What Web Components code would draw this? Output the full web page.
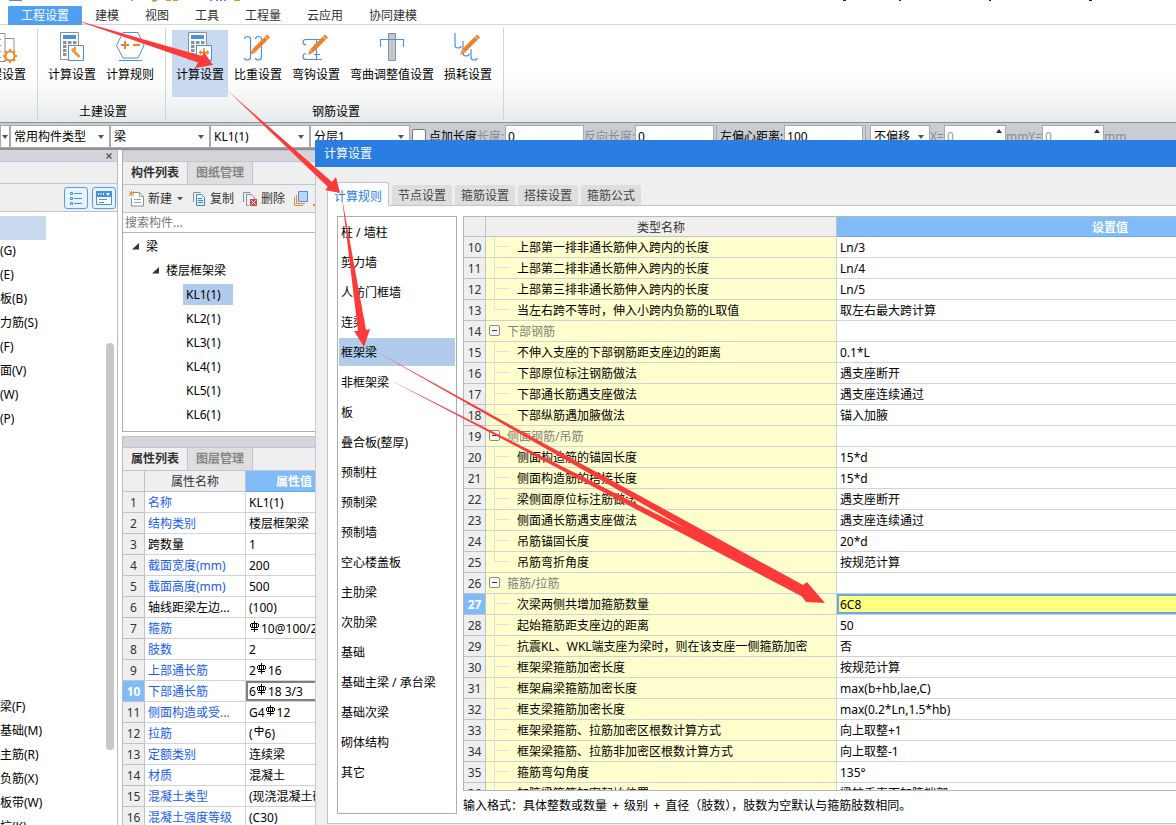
<!DOCTYPE html>
<html lang="zh-CN">
<head>
<meta charset="utf-8">
<title>计算设置</title>
<style>
html,body{height:100%}
body{margin:0;overflow:hidden;background:#fff;color:#000;font:12px/16px "Noto Sans","Noto Sans CJK SC",sans-serif}
</style>
</head>
<body>
<cost-app></cost-app>
<script>
const BASE = `*{box-sizing:border-box}button,input,select{font:inherit;color:inherit;margin:0;padding:0;border:0;background:none;border-radius:0;outline:0;appearance:none}
button{white-space:nowrap}a{color:inherit;text-decoration:none}svg{display:block;flex:none}ul{list-style:none;margin:0;padding:0}table{border-collapse:separate;border-spacing:0;table-layout:fixed}`;
function define(name, css, html) {
  customElements.define(name, class extends HTMLElement {
    constructor() {
      super();
      const t = document.createElement('template');
      t.innerHTML = `<style>${BASE}${css}</style>` + (typeof html === 'function' ? html(this) : html);
      this.attachShadow({ mode: 'open' }).appendChild(t.content.cloneNode(true));
    }
  });
}

const PENCIL = `<path d="M24 2.500l3 3-15 15-5 2.500 2-5.500z" fill="#f08028"/><path d="M22 4.500l3 3" stroke="#fff"/><path d="M9 17.500l3 3" stroke="#fff" stroke-width=".6"/>`;
const CALC = `<path d="M3.500 .5h18v27h-18z" fill="#fff" stroke="#84939e"/><path d="M6 3h13v4H6z" fill="#4c90dc"/><g fill="#84939e"><path d="M6 9h3.500v3H6zM11 9h3.500v3H11zM16 9h3.500v3H16zM6 13h3.500v3H6zM11 13h3.500v3H11zM6 17h3.500v3H6zM6 21h3.500v3H6z"/></g><path d="M11.500 13.500h15v15h-15z" fill="#fff" stroke="#4c90dc"/>`;
const ICONS = {
  project: `<path d="M2 1.500h16v28H2M18 6.500h9v22h-5" fill="none" stroke="#84939e"/><path d="M2 7.500h12M2 13.500h12M2 19.500h12M2 25.500h12" stroke="#84939e"/><circle cx="23" cy="24" r="4.500" fill="#fff" stroke="#f08a30" stroke-width="2"/><path d="M23 17v3M23 28v3M16 24h3M27 24h3M18 19l2 2M26 27l2 2M28 19l-2 2M20 27l-2 2" stroke="#f08a30" stroke-width="2"/>`,
  calc: CALC + `<path d="M16 18.500l6.500 6.500" stroke="#f0943c" stroke-width="2.500"/><path d="M14.500 16v3.500h3l1.500-1.500v-3l-2-.5v2z" fill="#f0943c"/>`,
  rule: `<path d="M8 .5h15l6 13-6 12.500H8L1.500 13.500z" fill="none" stroke="#4c90dc"/><path d="M4 28.500h23" stroke="#4c90dc"/><path d="M6 13h8M10 9v8M18 13h7" stroke="#f08028" stroke-width="2"/>`,
  rebar: CALC + `<path d="M14 20.500h10M19 16v9q-3 1-3-2M15.500 18.500v4M22.500 18.500v4" stroke="#f08028" fill="none" stroke-width="1.500"/>`,
  weight: `<path d="M1.500 7q0-2.500 3-2.500t3 2.500v18q0 3-3 3t-3-2M12.500 7q0-2.500 3-2.500t3 2.500v18q0 3-3 3t-3-2" stroke="#4c90dc" stroke-width="1.200" fill="none"/>` + PENCIL,
  hook: `<path d="M21 7.500H5q-3 0-3 2.500t3 3M21 27.500H5q-3 0-3-3t3-3M15.500 7.500v20M13 12.500h6M13 22.500h6" stroke="#4c90dc" stroke-width="1.200" fill="none"/>` + PENCIL,
  bend: `<path d="M11.500 1.500h7v27h-7z" fill="#c3c8cc" stroke="#84939e"/><path d="M3.500 15V7.500h23V15" stroke="#4c90dc" stroke-width="1.200" fill="none"/>`,
  loss: `<path d="M2 1v12q0 3 3 3t3-2M10 9v12q0 3 3 3t3-2M18 17v8q0 3 3 3t3-2" stroke="#4c90dc" stroke-width="1.200" fill="none"/>` + PENCIL
};

define('ribbon-tab', `:host{display:block}a{display:block;height:19px;line-height:20px;padding:0 13px;color:#333}
:host([active]) a{background:#4fa0f5;color:#fff;border-radius:1px 1px 0 0}`, '<a href="#"><slot></slot></a>');

define('ribbon-button', `:host{display:block}button{display:flex;flex-direction:column;align-items:center;padding:2px 4px 0;height:67px}
:host([active]) button{background:#c9d9f0}span{margin-top:4px;line-height:16px}`,
  el => `<button type="button"><svg width="30" height="31" viewBox="0 0 30 31">${ICONS[el.getAttribute('icon')]}</svg><span><slot></slot></span></button>`);

define('ribbon-group', `:host{display:flex;flex-direction:column;align-items:center;height:92px;padding:2px 7px 0 6px;border-right:1px solid #d0d4d6;margin-top:3px}
div{display:flex;gap:2px}p{margin:8px 0 0;line-height:14px;padding-left:4px}`,
  el => `<div><slot></slot></div><p>${el.getAttribute('label') || ''}</p>`);

define('app-ribbon', `:host{display:block}
.top{height:5px;overflow:hidden}nav{display:flex;height:20px;padding:0 8px;border-bottom:1px solid #d4d6d8;padding-top:1px}
.groups{display:flex;height:98px;background:linear-gradient(#fff 50%,#f2f4f4 80%,#e6eaea);border-bottom:1px solid #8c9094}
.cut{width:38px;overflow:hidden;align-items:flex-end}`,
`<div class="top"><svg width="1176" height="3"><path d="M9 0h13v1H9z" fill="#4c90dc"/><path d="M131 0h2v1h-2zM152 0h5v1h-2v1h-2v-1h-1zM166 0h5v1h-5zM173 0h5v1h-5zM234 0h6v1h-6z" fill="#f08a30"/><path d="M210 0h2v1h-2zM216 0h2v1h-2zM220 0h2v1h-2zM224 0h2v1h-2z" fill="#4c90dc"/><path d="M843 0h3v1h-3zM899 0h2v1h-2zM989 0h2v1h-2zM1089 0h3v1h-3z" fill="#222"/></svg></div>
<nav><ribbon-tab active>工程设置</ribbon-tab><ribbon-tab>建模</ribbon-tab><ribbon-tab>视图</ribbon-tab><ribbon-tab>工具</ribbon-tab><ribbon-tab>工程量</ribbon-tab><ribbon-tab>云应用</ribbon-tab><ribbon-tab>协同建模</ribbon-tab></nav>
<div class="groups">
<ribbon-group class="cut"><ribbon-button icon="project">工程设置</ribbon-button></ribbon-group>
<ribbon-group label="土建设置"><ribbon-button icon="calc">计算设置</ribbon-button><ribbon-button icon="rule">计算规则</ribbon-button></ribbon-group>
<ribbon-group label="钢筋设置"><ribbon-button icon="rebar" active>计算设置</ribbon-button><ribbon-button icon="weight">比重设置</ribbon-button><ribbon-button icon="hook">弯钩设置</ribbon-button><ribbon-button icon="bend">弯曲调整值设置</ribbon-button><ribbon-button icon="loss">损耗设置</ribbon-button></ribbon-group>
</div>`);

define('option-bar', `:host{display:flex;height:27px;padding-top:2px;background:#c9ccd2;border-bottom:2px solid #8e9196;white-space:nowrap;overflow:hidden}
.sel{position:relative;flex:none;width:100px;height:23px}
.sel::after{content:"";position:absolute;right:6px;top:10px;border:3px solid transparent;border-top:4px solid #555;border-bottom:0}
select,input{background:#fff;border:1px solid #a6aaae;height:23px;padding:0 3px;width:100%}
.first{width:10px}.first::after{right:2px}.off{width:60px;margin-left:1px}
input[type=text]{flex:none;width:79px;padding:0 2px}
.num{position:relative;flex:none;width:62px;color:#999}.num input[type=text]{width:62px}
.num::after{content:"";position:absolute;right:4px;top:4px;border:3px solid transparent;border-bottom:4px solid #333;border-top:0}
label{display:flex;line-height:23px;flex:none}
input[type=checkbox]{width:14px;height:14px;border:1px solid #777;border-radius:2px;margin:4px 3px 0 2px}
.g{color:#8a8d90}.len{width:28px}.rev{width:51px}.left{width:64px}
i{width:1px;height:23px;background:#a6aaae;margin:0 3px 0 2px}`,
`<div class="sel first"><select aria-label="楼层"><option></option></select></div>
<div class="sel"><select aria-label="构件分类"><option>常用构件类型</option></select></div>
<div class="sel"><select aria-label="构件类型"><option>梁</option></select></div>
<div class="sel"><select aria-label="构件"><option>KL1(1)</option></select></div>
<div class="sel"><select aria-label="分层"><option>分层1</option></select></div>
<label><input type="checkbox"><span>点加长度</span></label>
<label class="g len" for="len">长度:</label><input type="text" value="0" id="len">
<label class="g rev" for="rev">反向长度:</label><input type="text" value="0" id="rev">
<i></i><label class="left" for="left">左偏心距离:</label><input type="text" value="100" id="left">
<i></i><div class="sel off"><select aria-label="偏移"><option>不偏移</option></select></div>
<label class="g" for="x">X=</label><div class="num"><input type="text" value="0" id="x"></div>
<label class="g" for="y">mmY=</label><div class="num"><input type="text" value="0" id="y"></div>
<label class="g" for="y">mm</label>`);

const NAV = ['', '(G)', '(E)', '板(B)', '力筋(S)', '(F)', '面(V)', '(W)', '(P)', ...Array(11).fill(''), '梁(F)', '基础(M)', '主筋(R)', '负筋(X)', '板带(W)', '坑(K)'];
define('nav-panel', `:host{display:flex;flex-direction:column;width:118px;flex:none;border-right:1px solid #b9bdc3;overflow:hidden}
header{flex:none;height:12px;background:#d4d5da;border-bottom:1px solid #c0c4cc;display:flex;justify-content:flex-end;padding-right:3px}
header button{width:10px;height:11px;display:flex;align-items:center;justify-content:center}
.bar{flex:none;height:22px;background:#efefef;border-bottom:1px solid #c0c4cc}
.tools{flex:none;height:28px;background:#efefef;border-bottom:1px solid #c0c4cc;display:flex;justify-content:flex-end;gap:4px;padding:3px 1px 0}
.tools button{width:24px;height:22px;border:1px solid #4fa0f5;border-radius:3px;background:#e9f3fe;display:flex;align-items:center;justify-content:center}
.body{position:relative;flex:1;min-height:0;overflow:hidden;padding-top:3px}
li{height:24px;line-height:24px}li:first-child::before{content:"";display:block;width:46px;height:24px;background:#c9d9f0;border:solid #fff;border-width:1px 0 2px}
.thumb{position:absolute;left:106px;top:131px;width:8px;height:407px;border-radius:4px;background:#c8c8c8}`,
`<header><button type="button" aria-label="关闭"><svg width="6" height="6"><path d="M.5.5l5 5M5.500.5l-5 5" stroke="#555" stroke-width="1.200"/></svg></button></header>
<div class="bar"></div>
<div class="tools"><button type="button" aria-label="列表"><svg width="14" height="14" fill="none" stroke="#4590e0"><path d="M1.500 1.500h2v2h-2zM1.500 6.500h2v2h-2zM1.500 11.500h2v2h-2zM5 2.500h8M5 7.500h8M5 12.500h8"/></svg></button>
<button type="button" aria-label="窗格"><svg width="16" height="14"><path d="M.5.5h15v13H.5z" fill="#fff" stroke="#4590e0"/><path d="M1 1h14v5H1z" fill="#4590e0"/><path d="M2.500 2v2M5 2v2M7.500 2v2" stroke="#fff"/><path d="M10 2h4l-2 3z" fill="#fff"/><path d="M3 8.500h8M3 11.500h5" stroke="#4590e0"/></svg></button></div>
<div class="body"><ul>${NAV.map(t => `<li>${t}</li>`).join('')}</ul><div class="thumb"></div></div>`);

define('dock-tabs', `:host{display:block;flex:none}.strip{height:12px;background:#d4d5da;border:1px solid #c0c4cc;border-width:1px 0}
nav{display:flex;height:23px;background:#efefef;border-bottom:1px solid #c0c4cc}
button{width:65px;height:22px;line-height:22px;font-weight:bold;color:#333;border-right:1px solid #c0c4cc}
button+button{background:#dedede;color:#858585}`,
  el => `<div class="strip"></div><nav>${el.getAttribute('tabs').split(',').map(t => `<button type="button">${t}</button>`).join('')}</nav>`);

define('component-list', `:host{display:flex;flex-direction:column;flex:none;height:282px;border:1px solid #a9adb3;border-top:0}
.tools{display:flex;align-items:center;height:28px;background:#efefef;border-bottom:1px solid #c0c4cc;padding:1px 0 0 6px;flex:none;overflow:hidden}
.tools button{display:flex;align-items:center;gap:4px;height:20px;color:#333;margin-right:8px}.tools button.w{margin-right:9px}.tools span{line-height:18px}
.caret{margin-left:1px}
input{height:20px;width:100%;padding:0 2px;background:#fff;border-bottom:1px solid #b4b8be;flex:none}input::placeholder{color:#777;opacity:1}
ul{padding-top:1px}li{height:24px;line-height:24px;display:flex;align-items:center;padding-left:60px}
li span{line-height:21px;padding:0 12px 0 3px}li.on span{background:#b1cbec}
.a{padding-left:9px;gap:4px}.b{padding-left:29px;gap:4px}`,
`<dock-tabs tabs="构件列表,图纸管理"></dock-tabs>
<div class="tools">
<button type="button" class="w"><svg width="15" height="16" fill="none"><path d="M4 1.500h6.500l4 4v9.500h-12V7" fill="#fff" stroke="#84939e"/><path d="M10.500 1.500v4h4M5 8.500h7M5 11.500h7" stroke="#9aa6ae"/><path d="M0 0l5 5M5 0L0 5M2.500 0v5M0 2.500h5" stroke="#f0a040"/></svg><span>新建</span><svg class="caret" width="6" height="4"><path d="M0 0h6L3 3.500z" fill="#555"/></svg></button>
<button type="button"><svg width="14" height="16" fill="none"><path d="M1.500 11V1.500h7" stroke="#84939e"/><path d="M4.500 3.500h5l3 3v8h-8z" fill="#e9f3fe" stroke="#3d85d4"/><path d="M6 7.500h4M6 9.500h5M6 11.500h5" stroke="#3d85d4"/></svg><span>复制</span></button>
<button type="button"><svg width="15" height="16" fill="none"><path d="M1.500 11V1.500h7" stroke="#84939e"/><path d="M7 14.500H4.500v-11h5l3 3V8" stroke="#84939e"/><path d="M8 8h7v7H8z" fill="#d04848"/><path d="M9.500 9.500l4 4M13.500 9.500l-4 4" stroke="#fff"/></svg><span>删除</span></button>
<button type="button" aria-label="层间复制"><svg width="22" height="16" fill="none"><path d="M1.500 6v8.500H10M3.500 4v8.500H12" stroke="#f08a30"/><path d="M5.500.5h9v10h-9z" fill="#b9d7fb" stroke="#4590e0"/><path d="M20 13h2v2h-2z" fill="#f08a30"/></svg></button>
</div>
<input type="search" placeholder="搜索构件..." aria-label="搜索构件">
<ul><li class="a"><svg width="7" height="7"><path d="M7 0v6.500H0z" fill="#333"/></svg><span>梁</span></li>
<li class="b"><svg width="7" height="7"><path d="M7 0v6.500H0z" fill="#333"/></svg><span>楼层框架梁</span></li>
<li class="on"><span>KL1(1)</span></li><li><span>KL2(1)</span></li><li><span>KL3(1)</span></li><li><span>KL4(1)</span></li><li><span>KL5(1)</span></li><li><span>KL6(1)</span></li></ul>`);

define('rebar-mark', `:host{display:inline-block;width:11px;height:12px;vertical-align:top;margin:1px 0 0 1px}`,
  el => `<svg width="10" height="11" fill="none" stroke="#000">${el.hasAttribute('plain') ? '<path d="M1 2.500h8v3H1zM5 0v10"/>' : '<path d="M1 2.500h7M.5 3v3M8.500 3v3M1 6.500h7M1 8.500h7M2.500 2v5M6.500 2v5M4.500 0v11"/>'}</svg>`);

const D = '<rebar-mark></rebar-mark>';
const PROPS = [['名称','KL1(1)'],['结构类别','楼层框架梁'],['跨数量','1',1],['截面宽度(mm)','200'],['截面高度(mm)','500'],['轴线距梁左边...','(100)',1],['箍筋',D+'10@100/200(2)'],['肢数','2'],['上部通长筋','2'+D+'16'],['下部通长筋','6'+D+'18 3/3'],['侧面构造或受...','G4'+D+'12'],['拉筋','(<rebar-mark plain></rebar-mark>6)'],['定额类别','连续梁'],['材质','混凝土'],['混凝土类型','(现浇混凝土碎石)'],['混凝土强度等级','(C30)']];
define('property-grid', `:host{display:flex;flex-direction:column;flex:1;min-height:0;overflow:hidden;border-left:1px solid #b9bdc3}
table{width:220px}th,td{height:21px;padding:2px 0 0 3px;line-height:18px;border:solid #cfd2d6;border-width:0 1px 1px 0;text-align:left;font-weight:normal;white-space:nowrap;overflow:hidden}
th{background:#efefef;text-align:center;padding:2px 0 0;color:#333;border-color:#bfc3c9}thead th:last-child{background:#80bbfa;color:#fff;font-weight:bold;border-color:#6aa9ea}
.n{color:#1a5cf0}tr.on th{background:#80bbfa;color:#fff;font-weight:bold}tr.on td:last-child{box-shadow:inset 0 0 0 2px #808080}`,
`<dock-tabs tabs="属性列表,图层管理"></dock-tabs>
<table><colgroup><col style="width:22px"><col style="width:101px"><col></colgroup><thead><tr><th></th><th>属性名称</th><th>属性值</th></tr></thead><tbody>
${PROPS.map((p, i) => `<tr${i === 9 ? ' class="on"' : ''}><th>${i + 1}</th><td class="${p[2] ? '' : 'n'}">${p[0]}</td><td>${p[1]}</td></tr>`).join('')}</tbody></table>`);

const RULES = [['上部第一排非通长筋伸入跨内的长度','Ln/3'],['上部第二排非通长筋伸入跨内的长度','Ln/4'],['上部第三排非通长筋伸入跨内的长度','Ln/5'],['当左右跨不等时，伸入小跨内负筋的L取值','取左右最大跨计算','end'],['下部钢筋','','group'],['不伸入支座的下部钢筋距支座边的距离','0.1*L'],['下部原位标注钢筋做法','遇支座断开'],['下部通长筋遇支座做法','遇支座连续通过'],['下部纵筋遇加腋做法','锚入加腋','end'],['侧面钢筋/吊筋','','group'],['侧面构造筋的锚固长度','15*d'],['侧面构造筋的搭接长度','15*d'],['梁侧面原位标注筋做法','遇支座断开'],['侧面通长筋遇支座做法','遇支座连续通过'],['吊筋锚固长度','20*d'],['吊筋弯折角度','按规范计算','end'],['箍筋/拉筋','','group'],['次梁两侧共增加箍筋数量','6C8','on'],['起始箍筋距支座边的距离','50'],['抗震KL、WKL端支座为梁时，则在该支座一侧箍筋加密','否'],['框架梁箍筋加密长度','按规范计算'],['框架扁梁箍筋加密长度','max(b+hb,lae,C)'],['框支梁箍筋加密长度','max(0.2*Ln,1.5*hb)'],['框架梁箍筋、拉筋加密区根数计算方式','向上取整+1'],['框架梁箍筋、拉筋非加密区根数计算方式','向上取整-1'],['箍筋弯勾角度','135°'],['加腋梁箍筋加密起始位置','梁柱垂直面加腋端部']];
define('rule-table', `:host{display:block;overflow:hidden;border:1px solid #b4b8be;border-right:0}
table{width:920px}th,td{height:21px;line-height:18px;padding:2px 0 0 3px;border:solid #cfd2d6;border-width:0 1px 1px 0;font-weight:normal;text-align:left;white-space:nowrap}
th{background:#efefef;color:#333;text-align:center;padding:2px 0 0;border-color:#bfc3c9}thead th{height:20px;line-height:17px}thead th:last-child{background:#80bbfa;color:#fff;font-weight:bold;border-color:#6aa9ea}
td.k{background:#ffffcd;position:relative;padding-left:31px}
td.k::before{content:"";position:absolute;left:8px;top:0;height:21px;border-left:1px solid #dfe0d8}
td.k::after{content:"";position:absolute;left:8px;top:9px;width:16px;border-top:1px solid #dfe0e0}
.end td.k::before{height:10px}.group td.k{padding-left:21px;color:#808080}
.group td.k::before,.group td.k::after{display:none}
button{position:absolute;left:3px;top:4px;width:11px;height:11px;border:1px solid #8a8a8a;border-radius:2px;background:#fff}
button::before{content:"";position:absolute;left:2px;top:4px;width:5px;height:1px;background:#333}
.on th{background:#80bbfa;color:#fff;font-weight:bold}.on td:last-child{padding:0}
input{display:block;width:100%;height:20px;background:#ffff80;border:2px solid #6aa7e8;padding:0 1px;line-height:16px}`,
`<table><colgroup><col style="width:22px"><col style="width:351px"><col></colgroup><thead><tr><th></th><th>类型名称</th><th>设置值</th></tr></thead><tbody>
${RULES.map(([k, v, c], i) => `<tr class="${c || ''}"><th>${i + 10}</th><td class="k">${c === 'group' ? '<button type="button" aria-label="折叠"></button>' : ''}${k}</td><td>${c === 'on' ? `<input aria-label="${k}" value="${v}">` : v}</td></tr>`).join('')}</tbody></table>`);

define('settings-dialog', `:host{display:flex;flex-direction:column;background:#efefef;border-left:1px solid #c3c8d4}
h1{flex:none;margin:0 0 0 -1px;height:27px;line-height:28px;font-size:12px;font-weight:normal;color:#fff;background:#2b7de1;padding-left:9px}
nav{flex:none;display:flex;align-items:flex-end;gap:3px;height:39px;padding-left:11px;position:relative}
nav button{height:20px;line-height:22px;width:60px;background:#dedede;color:#444;border-radius:3px 3px 0 0;margin-bottom:1px;text-align:center}
nav .on{height:24px;width:62px;margin:0;background:#fff;color:#2b7de1;border:1px solid #c0c4cc;border-bottom:0;line-height:28px}
section{flex:1;min-height:0;display:flex;gap:6px;margin:0 0 1px 11px;background:#fff;border:1px solid #c0c4cc;border-right:0;border-top:0;padding:10px 0 9px 9px;box-shadow:0 -1px #c0c4cc}
ul{flex:none;width:120px;border:1px solid #a9adb3;padding:1px 1px;display:flex;flex-direction:column;gap:2px;overflow:hidden}
li{height:28px;line-height:26px;padding:2px 0 0 2px;flex:none}li.on{background:#b1cbec}
.main{flex:1;min-width:0;display:flex;flex-direction:column}rule-table{flex:1;min-height:0}
p{margin:0;padding-top:7px;line-height:16px;flex:none;white-space:nowrap}b{font-weight:normal;margin:0 2px}`,
`<h1>计算设置</h1>
<nav><button type="button" class="on">计算规则</button><button type="button">节点设置</button><button type="button">箍筋设置</button><button type="button">搭接设置</button><button type="button">箍筋公式</button></nav>
<section><ul>${['柱 / 墙柱','剪力墙','人防门框墙','连梁','框架梁','非框架梁','板','叠合板(整厚)','预制柱','预制梁','预制墙','空心楼盖板','主肋梁','次肋梁','基础','基础主梁 / 承台梁','基础次梁','砌体结构','其它'].map((t, i) => `<li${i === 4 ? ' class="on"' : ''}>${t}</li>`).join('')}</ul>
<div class="main"><rule-table></rule-table><p>输入格式：具体整数或数量 <b>+</b> 级别 <b>+</b> 直径（肢数），肢数为空默认与箍筋肢数相同。</p></div></section>`);

define('flow-arrows', `:host{display:block;pointer-events:none}`,
`<svg width="840" height="620" fill="#fd3a3a"><path d="M72 19L202 56 204 52 213 65 195 68 198 62.500zM227 90L332 182 336 177 340 193 325 190 328 187zM342 198L366 330 370 329 364 347 354 331 358 331zM377 352L803 585 807 582 825 603 806 602 800 594zM388 379L802 587 825 603 806 602 803 597z"/></svg>`);

define('cost-app', `:host{display:flex;flex-direction:column;height:100vh;position:relative;overflow:hidden;background:#fff}
app-ribbon,option-bar{flex:none}
main{flex:1;min-height:0;display:flex;gap:4px}
.dock{width:222px;flex:none;display:flex;flex-direction:column;gap:4px;min-height:0}
settings-dialog{position:absolute;left:315px;top:140px;right:0;bottom:0}
flow-arrows{position:absolute;left:0;top:0;z-index:2}`,
`<app-ribbon></app-ribbon><option-bar></option-bar>
<main><nav-panel></nav-panel><div class="dock"><component-list></component-list><property-grid></property-grid></div></main>
<settings-dialog></settings-dialog><flow-arrows></flow-arrows>`);
</script>
</body>
</html>
